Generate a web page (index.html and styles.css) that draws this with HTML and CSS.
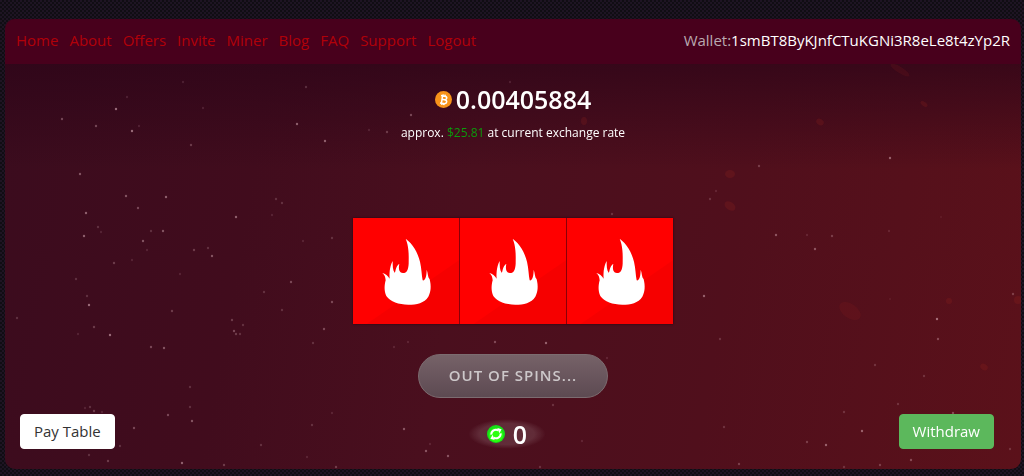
FILE: index.html
```html
<!DOCTYPE html>
<html lang="en">
<head>
    <meta charset="UTF-8">
    <meta name="viewport" content="width=device-width, initial-scale=1.0">
    <title>Spins</title>
    <link rel="stylesheet" href="styles.css">
</head>
<body>

    <div class="container">
        <svg class="stars" viewBox="5 19 1016 450" preserveAspectRatio="xMidYMid slice" aria-hidden="true">
            <g id="stars"></g>
            <g fill="#a02a20" opacity="0.2">
                <ellipse cx="730" cy="174" rx="5" ry="4"/>
                <ellipse cx="730" cy="206" rx="6" ry="4" transform="rotate(35 730 206)"/>
                <ellipse cx="850" cy="311" rx="12" ry="7" opacity="0.7" transform="rotate(35 850 311)"/>
                <ellipse cx="820" cy="122" rx="4" ry="3" transform="rotate(35 820 122)"/>
                <ellipse cx="900" cy="70" rx="11" ry="3" opacity="0.7" transform="rotate(32 900 70)"/>
                <ellipse cx="924" cy="104" rx="4" ry="2" transform="rotate(35 924 104)"/>
                <ellipse cx="584" cy="121" rx="3" ry="4"/>
                <ellipse cx="984" cy="367" rx="4" ry="3" transform="rotate(35 984 367)"/>
                <ellipse cx="949" cy="301" rx="3" ry="3"/>
                <ellipse cx="1018" cy="300" rx="4" ry="4"/>
            </g>
        </svg>

        <div class="header">
            <nav class="menu">
                <a href="#">Home</a>
                <a href="#">About</a>
                <a href="#">Offers</a>
                <a href="#">Invite</a>
                <a href="#">Miner</a>
                <a href="#">Blog</a>
                <a href="#">FAQ</a>
                <a href="#">Support</a>
                <a href="#">Logout</a>
            </nav>
            <div class="wallet">Wallet:<span>1smBT8ByKJnfCTuKGNi3R8eLe8t4zYp2R</span></div>
        </div>

        <div class="game">
            <div class="balance">
                <svg class="coin" viewBox="0 0 34 34" aria-hidden="true">
                    <circle cx="17" cy="17" r="17" fill="#f7931a"/>
                    <path d="M11 10h8q4 0 4 3.500t-4 3.500q5 0 5 4t-5 4h-8M14 10v15M14 17h5M15 7v3M19 7v3M15 25v3M19 25v3" fill="none" stroke="#fff" stroke-width="3" transform="rotate(8 17 17)"/>
                </svg>
                <span>0.00405884</span>
            </div>
            <p class="rate">approx. <span>$25.81</span> at current exchange rate</p>

            <div class="reels">
                <svg class="reel" viewBox="24 25 318 318" aria-hidden="true"><use href="#flame"/></svg>
                <svg class="reel" viewBox="24 25 318 318" aria-hidden="true"><use href="#flame"/></svg>
                <svg class="reel" viewBox="24 25 318 318" aria-hidden="true"><use href="#flame"/></svg>
            </div>

            <button class="spin-btn" type="button">OUT OF SPINS...</button>
        </div>

        <div class="footer">
            <button class="btn pay-btn" type="button">Pay Table</button>
            <div class="spins">
                <svg class="spin-icon" viewBox="0 0 54 54" aria-hidden="true">
                    <circle cx="27" cy="27" r="27" fill="#16e016"/>
                    <circle cx="27" cy="30" r="21" fill="#2cff10"/>
                    <path d="M13 29a14 14 0 0 1 21-13M41 25a14 14 0 0 1-21 13" fill="none" stroke="#fff" stroke-width="6"/>
                    <path d="M31 9l13 4l-7 12zM23 45l-13-4l7-12z" fill="#fff"/>
                </svg>
                <span>0</span>
            </div>
            <button class="btn withdraw-btn" type="button">Withdraw</button>
        </div>
    </div>

    <svg class="shapes" aria-hidden="true">
        <symbol id="flame" overflow="visible">
            <path d="M342 152L65 343H342Z" fill="#f60000"/>
            <path d="M182 87C204 103 218 128 225 156C230 178 230 198 233 212C241 214 245 198 245 180C249 190 248 202 254 209C259 229 258 247 250 261C238 280 215 285 190 285C161 285 136 276 124 259C117 244 118 226 122 212C121 201 119 196 112 190C121 192 129 199 134 207C133 195 133 172 143 154C143 169 143 181 149 189C152 189 150 171 163 162C160 177 162 189 174 190C186 190 190 179 191 162C192 134 191 108 182 87Z" fill="#fff"/>
        </symbol>
    </svg>

    <script>
        // x, y, brightness
        const stars = [
            [116,109,8],[62,119,5],[96,126,5],[132,131,8],[191,145,4],[297,124,7],[325,141,7],[306,87,3],
            [127,97,2],[183,82,2],[203,108,2],[139,126,2],[411,115,5],[387,132,4],[369,130,2],[510,82,2],
            [80,174,6],[126,196,6],[166,197,7],[138,208,5],[86,213,7],[84,236,7],[98,227,3],[101,232,2],
            [151,231,3],[163,231,6],[143,241,6],[236,217,7],[212,256,6],[194,250,4],[208,248,3],[147,250,2],
            [114,263,4],[132,260,2],[276,199,3],[282,203,3],[272,215,2],[332,238,3],[303,241,2],[291,282,5],
            [332,302,5],[264,292,3],[76,279,3],[87,296,3],[89,305,8],[172,311,4],[180,274,2],[282,310,3],
            [17,318,3],[110,335,8],[94,327,4],[78,334,2],[151,347,5],[164,348,6],[232,320,4],[234,331,5],
            [236,334,4],[240,334,3],[243,325,3],[324,329,5],[313,343,3],[190,387,3],[190,407,3],[192,421,6],
            [168,415,5],[134,428,5],[94,411,4],[102,412,2],[85,408,2],[90,407,3],[120,446,3],[89,455,3],
            [108,461,4],[182,463,7],[224,465,4],[261,445,3],[312,425,3],[332,413,2],[307,457,2],[336,467,4],
            [495,342,5],[546,343,7],[404,429,6],[426,451,6],[448,456,6],[430,444,2],[553,405,3],[540,467,3],
            [607,358,2],[582,441,2],[759,166,4],[710,199,3],[716,191,2],[776,235,6],[815,249,6],[832,236,4],
            [807,235,2],[890,299,1],[704,296,7],[937,319,8],[938,339,5],[889,231,2],[1013,294,4],[890,158,7],
            [720,339,3],[875,365,3],[924,376,3],[844,412,3],[862,431,7],[826,445,7],[807,442,4],[724,427,3],
            [739,464,4],[844,467,3],[880,465,4],[911,460,5],[953,413,5],[1010,449,3],[898,404,3],[941,217,1],
            [612,214,3],[394,347,2],[408,342,2]
        ];
        document.getElementById('stars').innerHTML = stars.map(function(s) {
            return '<circle cx="' + s[0] + '" cy="' + s[1] + '" r="1.2" fill="#e0b4be" opacity="' + s[2] / 14 + '"/>';
        }).join('');
    </script>
</body>
</html>
```
FILE: styles.css
```css
:root {
    --mainFont: "Open Sans", "Noto Sans", sans-serif;
    --linkColor: #b10009;
    --headerColor: #48001c;
}
* {
    box-sizing: border-box;
}
body {
    margin: 0;
    padding: 19px 3px 7px 5px;
    background-color: #130e17;
    background-image: repeating-conic-gradient(#100d13 0 25%, #1e1423 0 50%);
    background-size: 4px 4px;
    color: white;
    font-family: var(--mainFont);
    font-size: 15px;
    line-height: 21px;
}
.container {
    position: relative;
    border-radius: 10px;
    overflow: hidden;
    background-image:
        linear-gradient(rgba(44, 4, 24, 0.7) 45px, rgba(44, 4, 24, 0) 150px),
        linear-gradient(100deg, #3b0c1e, #410c1d 25%, #4a0f1e 45%, #500f1c 70%, #5b111a);
}
.stars {
    position: absolute;
    top: 0;
    left: 0;
    width: 100%;
    height: 100%;
}
.header {
    position: relative;
    display: flex;
    justify-content: space-between;
    align-items: center;
    padding: 11px 11px 13px;
    background-color: var(--headerColor);
}
.menu {
    display: flex;
    gap: 11px;
}
.menu a {
    color: var(--linkColor);
    text-decoration: none;
}
.wallet {
    color: #b9a9b0;
}
.wallet span {
    color: white;
}
.game {
    position: relative;
    display: flex;
    flex-direction: column;
    align-items: center;
    padding-top: 17px;
}
.balance {
    display: flex;
    align-items: center;
    gap: 4px;
    font-size: 25px;
    font-weight: 600;
    line-height: 36px;
}
.coin {
    width: 17px;
    height: 17px;
}
.rate {
    margin: 6px 0 75px;
    font-size: 12px;
    font-weight: 500;
    line-height: 20px;
}
.rate span {
    color: #0c9a0c;
}
.reels {
    display: flex;
    gap: 1px;
    background-color: #8a0008;
    box-shadow: 0 0 2px #25040f;
}
.reel {
    width: 106px;
    height: 106px;
    background-color: #ff0000;
}
.spin-btn {
    margin-top: 30px;
    padding: 9px 30px 11px;
    border: 1px solid #7c6c70;
    border-radius: 22px;
    background: linear-gradient(#766268, #5d4a52);
    color: #cdc8ca;
    font-family: var(--mainFont);
    font-size: 15px;
    font-weight: 700;
    line-height: 22px;
    letter-spacing: 1px;
    font-weight: 600;
}
.footer {
    position: relative;
    display: grid;
    grid-template-columns: 1fr auto 1fr;
    align-items: center;
    padding: 16px 27px 20px 15px;
}
.btn {
    padding: 6px 13px;
    border: 1px solid white;
    border-radius: 4px;
    font-family: var(--mainFont);
    font-size: 15px;
    line-height: 21px;
}
.pay-btn {
    justify-self: start;
    background-color: white;
    color: #333;
}
.withdraw-btn {
    justify-self: end;
    border-color: #5cb85c;
    background-color: #5cb85c;
    color: white;
}
.spins {
    display: flex;
    align-items: center;
    align-self: end;
    gap: 8px;
    padding: 0 19px;
    background: radial-gradient(closest-side, rgba(255, 255, 255, 0.12) 70%, rgba(255, 255, 255, 0));
    font-size: 25px;
    font-weight: 600;
    line-height: 30px;
}
.spin-icon {
    width: 18px;
    height: 18px;
}
.shapes {
    display: none;
}
```
